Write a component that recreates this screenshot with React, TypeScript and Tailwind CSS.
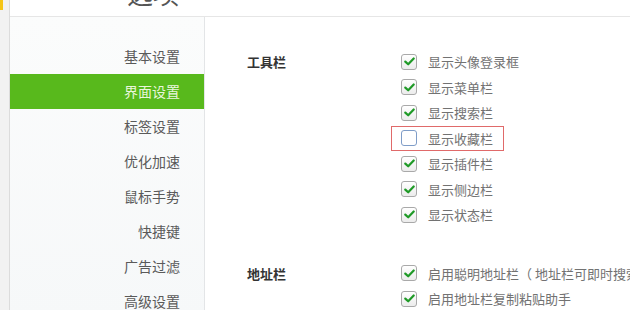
const font = { fontFamily: '"Noto Sans CJK SC", "Noto Sans", sans-serif' };

const navItems = ['基本设置', '界面设置', '标签设置', '优化加速', '鼠标手势', '快捷键', '广告过滤', '高级设置'];

type Opt = { label: string; checked: boolean; highlight?: boolean };

const toolbar: Opt[] = [
  { label: '显示头像登录框', checked: true },
  { label: '显示菜单栏', checked: true },
  { label: '显示搜索栏', checked: true },
  { label: '显示收藏栏', checked: false, highlight: true },
  { label: '显示插件栏', checked: true },
  { label: '显示侧边栏', checked: true },
  { label: '显示状态栏', checked: true },
];

const addressBar: Opt[] = [
  { label: '启用聪明地址栏（ 地址栏可即时搜索 ）', checked: true },
  { label: '启用地址栏复制粘贴助手', checked: true },
];

function CheckBox({ checked }: { checked: boolean }) {
  if (!checked) {
    return <span className="w-[16px] h-[16px] rounded-[3px] border border-[#7f9dc8] bg-white shrink-0" />;
  }
  return (
    <span className="w-[16px] h-[16px] rounded-[3px] border border-[#a9a9a9] bg-gradient-to-b from-white to-[#ececec] shrink-0 flex items-center justify-center">
      <svg width="11" height="9" viewBox="0 0 11 9">
        <path d="M1.3 4.6 L4.2 7.3 L9.7 1.5" fill="none" stroke="#1f9a27" strokeWidth="2.2" strokeLinecap="round" strokeLinejoin="round" />
      </svg>
    </span>
  );
}

function Section({ title, options }: { title: string; options: Opt[] }) {
  return (
    <div className="flex">
      <div className="w-[186px] shrink-0 pl-[42px] h-[25.5px] flex items-center text-[13px] font-bold text-[#333]">{title}</div>
      <div className="flex flex-col">
        {options.map((o) => (
          <div key={o.label} className="h-[25.5px] flex">
            <div
              className={`flex items-center gap-[11px] pl-[9px] pr-[10px] border whitespace-nowrap ${
                o.highlight ? 'border-[#e06a6a]' : 'border-transparent'
              }`}
            >
              <CheckBox checked={o.checked} />
              <span className="text-[13px] text-[#727272]">{o.label}</span>
            </div>
          </div>
        ))}
      </div>
    </div>
  );
}

export default function App() {
  return (
    <div className="w-[630px] h-[310px] overflow-hidden flex bg-white" style={font}>
      {/* left window strip */}
      <div className="w-[10px] shrink-0 bg-[#f2f2f2] border-r border-[#dcdcdc]">
        <div className="w-[3px] h-[10px] bg-[#f5c518]" />
      </div>

      <div className="flex-1 flex flex-col">
        {/* header */}
        <div className="h-[17px] shrink-0 border-b border-[#e6e6e6] overflow-hidden">
          <div className="pl-[117px] -mt-[22px] text-[26px] leading-[30px] text-[#555]">选项</div>
        </div>

        <div className="flex-1 flex">
          {/* sidebar */}
          <div className="w-[195px] shrink-0 bg-gradient-to-b from-[#fbfcfc] to-[#f6f8f9] border-r border-[#e3e5e7] pt-[22px]">
            {navItems.map((n, i) => (
              <div
                key={n}
                className={`h-[35px] flex items-center justify-end pr-[24px] text-[14px] ${
                  i === 1 ? 'bg-[#58b91c] text-[#eaf6dc]' : 'text-[#5a5a5a]'
                }`}
              >
                {n}
              </div>
            ))}
          </div>

          {/* content */}
          <div className="flex-1 min-w-0 pt-[32px] flex flex-col gap-[33px]">
            <Section title="工具栏" options={toolbar} />
            <Section title="地址栏" options={addressBar} />
          </div>
        </div>
      </div>
    </div>
  );
}
